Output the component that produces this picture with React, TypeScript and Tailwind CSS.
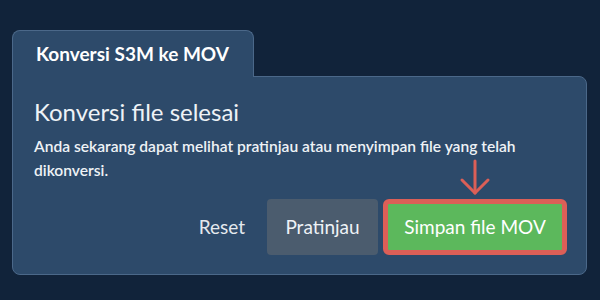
export default function App() {
  return (
    <div
      className="w-[600px] h-[300px] bg-[#11233a] pt-[30px] pl-[12px]"
      style={{ fontFamily: "Lato, 'Noto Sans', sans-serif" }}
    >
      <div className="flex flex-col w-[575px]">
        <div className="relative z-10 -mb-px w-[242px] h-[47px] flex items-center pl-[23px] bg-[#2d4a6a] border border-b-0 border-[#4b6889] rounded-t-lg">
          <span className="text-[19px] font-bold text-white">Konversi S3M ke MOV</span>
        </div>
        <div className="bg-[#2d4a6a] border border-[#4b6889] rounded-lg rounded-tl-none pt-[19px] pl-[21px] pr-[19px] pb-[19px]">
          <h1 className="text-[24px] leading-[32px] text-[#eef2f6]">Konversi file selesai</h1>
          <p className="mt-[6px] text-[15.6px] leading-[24px] font-semibold text-[#eef2f6] w-[500px]">
            Anda sekarang dapat melihat pratinjau atau menyimpan file yang telah dikonversi.
          </p>
          <div className="mt-[17px] flex items-center justify-end">
            <button className="mr-[22px] text-[19px] text-[#e4e9ee]">Reset</button>
            <button className="h-[56px] w-[111px] rounded bg-[#4b5c6e] text-[19px] text-[#eef2f6]">
              Pratinjau
            </button>
            <div className="relative ml-[5px]">
              <svg
                className="absolute left-1/2 -translate-x-1/2 -top-[40px]"
                width="32"
                height="38"
                viewBox="0 0 32 38"
                fill="none"
                stroke="#dc5f57"
                strokeWidth="3"
                strokeLinecap="round"
                strokeLinejoin="round"
              >
                <path d="M16 2 V34" />
                <path d="M3 21 L16 34 L29 21" />
              </svg>
              <button className="h-[56px] w-[184px] rounded-md border-[5px] border-[#dc5f57] bg-[#5cb85c] text-[19px] text-white">
                Simpan file MOV
              </button>
            </div>
          </div>
        </div>
      </div>
    </div>
  );
}
